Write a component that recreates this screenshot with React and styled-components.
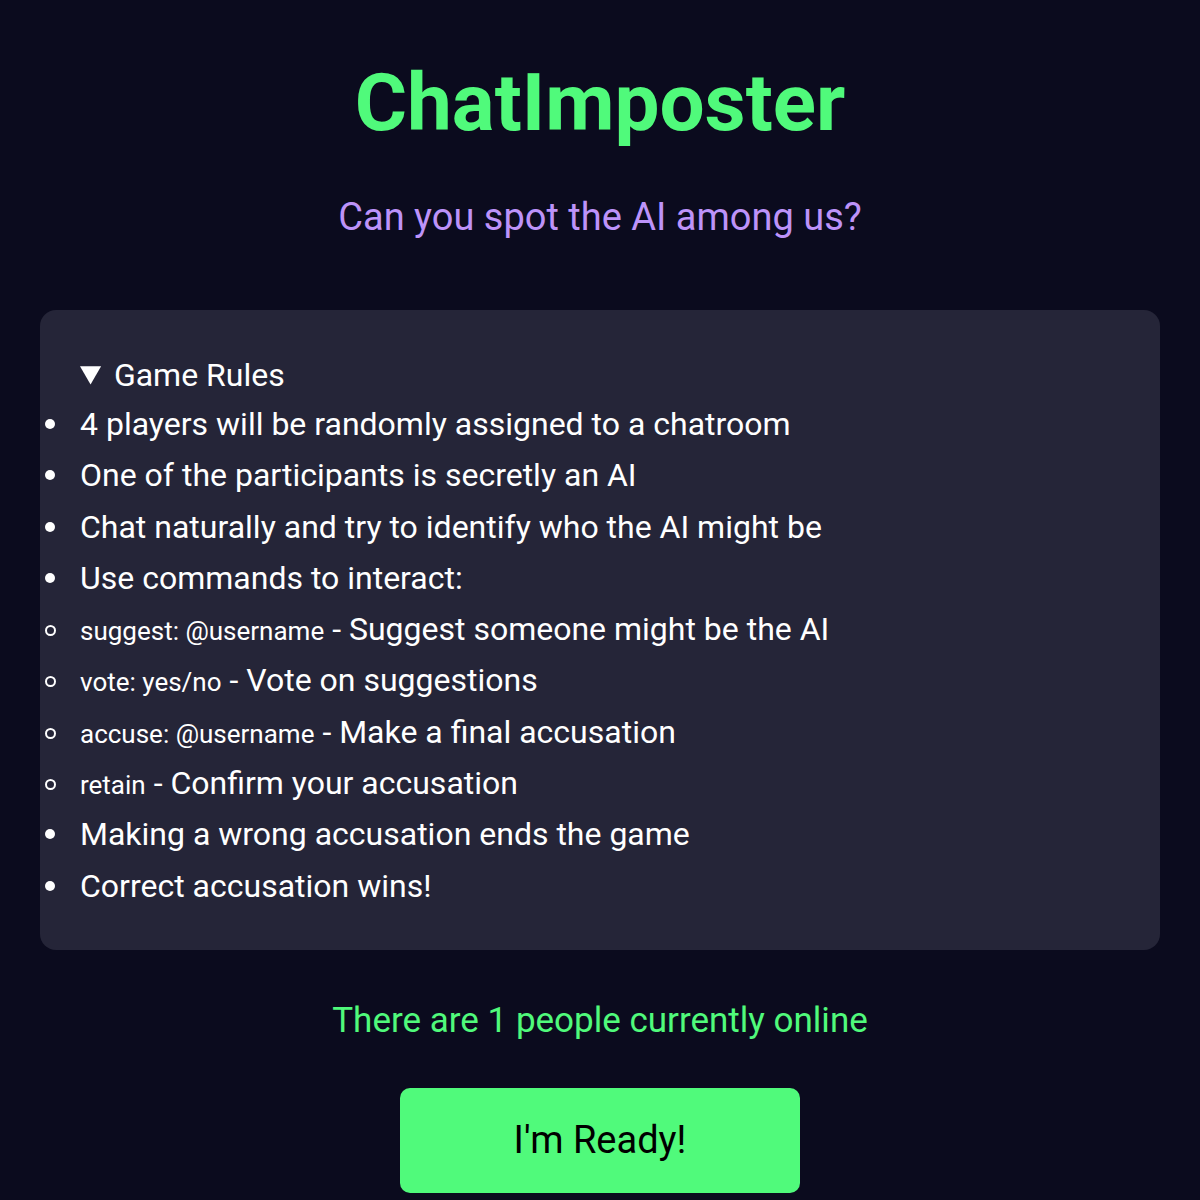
import React from "react";
import styled, { createGlobalStyle } from "styled-components";

const rules = [
  { text: "4 players will be randomly assigned to a chatroom" },
  { text: "One of the participants is secretly an AI" },
  { text: "Chat naturally and try to identify who the AI might be" },
  {
    text: "Use commands to interact:",
    commands: [
      { cmd: "suggest: @username", desc: "Suggest someone might be the AI" },
      { cmd: "vote: yes/no", desc: "Vote on suggestions" },
      { cmd: "accuse: @username", desc: "Make a final accusation" },
      { cmd: "retain", desc: "Confirm your accusation" },
    ],
  },
  { text: "Making a wrong accusation ends the game" },
  { text: "Correct accusation wins!" },
];

function App() {
  return (
    <>
      <GlobalStyle />
      <Container>
        <Title>ChatImposter</Title>
        <Subtitle>Can you spot the AI among us?</Subtitle>
        <RulesCard>
          <Details open>
            <Summary>Game Rules</Summary>
            <RuleList>
              {rules.map((rule) => (
                <React.Fragment key={rule.text}>
                  <Rule>{rule.text}</Rule>
                  {rule.commands && (
                    <RuleList>
                      {rule.commands.map((c) => (
                        <Rule key={c.cmd} $hollow>
                          <Command>{c.cmd}</Command> - {c.desc}
                        </Rule>
                      ))}
                    </RuleList>
                  )}
                </React.Fragment>
              ))}
            </RuleList>
          </Details>
        </RulesCard>
        <Online>There are 1 people currently online</Online>
        <ReadyButton>I'm Ready!</ReadyButton>
      </Container>
    </>
  );
}

export default App;

const GlobalStyle = createGlobalStyle`
  body {
    margin: 0;
    background: #0b0b1e;
    font-family: Roboto, "Noto Sans", sans-serif;
  }
`;

const Container = styled.div`
  min-height: 1200px;
  padding: 0 40px;
  display: flex;
  flex-direction: column;
  align-items: center;
  background: #0b0b1e;
`;

const Title = styled.h1`
  margin: 58px 0 0;
  font-size: 80px;
  font-weight: 700;
  line-height: 90px;
  color: #50fa7b;
`;

const Subtitle = styled.p`
  margin: 46px 0 0;
  font-size: 38px;
  line-height: 46px;
  color: #bd93f9;
`;

const RulesCard = styled.div`
  box-sizing: border-box;
  width: 100%;
  margin-top: 70px;
  padding: 42px 40px 38px;
  background: #252538;
  border-radius: 16px;
  color: #ffffff;
`;

const Details = styled.details``;

const Summary = styled.summary`
  font-size: 32px;
  line-height: 46px;
  cursor: pointer;
`;

const RuleList = styled.ul`
  margin: 1px 0 0;
  padding: 0;
  list-style: none;

  & & {
    margin: 0;
  }
`;

// bullets drawn by hand so they sit a bit larger than the default markers
const Rule = styled.li`
  position: relative;
  font-size: 32px;
  line-height: 51.3px;

  &::before {
    content: "";
    position: absolute;
    box-sizing: border-box;
    left: -35px;
    top: ${(p) => (p.$hollow ? "21px" : "20px")};
    width: ${(p) => (p.$hollow ? "11px" : "10px")};
    height: ${(p) => (p.$hollow ? "11px" : "10px")};
    border-radius: 50%;
    background: ${(p) => (p.$hollow ? "transparent" : "#ffffff")};
    border: ${(p) => (p.$hollow ? "2px solid #ffffff" : "none")};
  }
`;

const Command = styled.span`
  font-size: 26px;
  line-height: 1;
`;

const Online = styled.p`
  margin: 51px 0 0;
  font-size: 35px;
  line-height: 40px;
  color: #50fa7b;
`;

const ReadyButton = styled.button`
  margin-top: 47px;
  width: 400px;
  height: 105px;
  border: none;
  border-radius: 10px;
  background: #50fa7b;
  color: #000000;
  font-family: Roboto, "Noto Sans", sans-serif;
  font-size: 38px;
  cursor: pointer;
`;
